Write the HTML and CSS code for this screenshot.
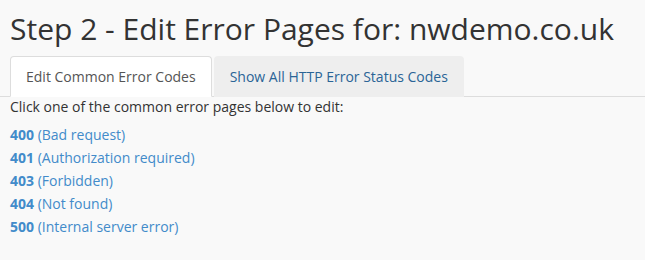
FILE: index.html
```html
<!DOCTYPE html>
<html lang="en">
<head>
  <meta charset="UTF-8">
  <title>Edit Error Pages</title>
  <link rel="stylesheet" href="styles.css">
</head>
<body>
  <h1>Step 2 - Edit Error Pages for: nwdemo.co.uk</h1>

  <ul class="tabs">
    <li class="active"><a href="#common">Edit Common Error Codes</a></li>
    <li><a href="#all">Show All HTTP Error Status Codes</a></li>
  </ul>

  <div class="tab-content">
    <p>Click one of the common error pages below to edit:</p>
    <ul class="error-list">
      <li><a href="#400"><strong>400</strong> (Bad request)</a></li>
      <li><a href="#401"><strong>401</strong> (Authorization required)</a></li>
      <li><a href="#403"><strong>403</strong> (Forbidden)</a></li>
      <li><a href="#404"><strong>404</strong> (Not found)</a></li>
      <li><a href="#500"><strong>500</strong> (Internal server error)</a></li>
    </ul>
  </div>
</body>
</html>
```

FILE: styles.css
```css
body {
  font-family: 'Open Sans', sans-serif;
  font-size: 14px;
  line-height: 1.42857;
  color: #333;
  background: #f9f9f9;
  margin: 0;
  padding: 0 10px;
}
h1 {
  font-size: 30px;
  font-weight: 400;
  line-height: 1.1;
  margin: 12px 0 11px;
}
a {
  color: #428bca;
  text-decoration: none;
}
.tabs {
  list-style: none;
  display: flex;
  margin: 0 -10px;
  padding: 0 10px;
  border-bottom: 1px solid #ddd;
}
.tabs li {
  margin-bottom: -1px;
}
.tabs a {
  display: block;
  margin-right: 2px;
  padding: 10px 15px 9px;
  border: 1px solid transparent;
  border-radius: 4px 4px 0 0;
  background: #eee;
  color: #2a6496;
}
.tabs .active a {
  color: #555;
  background: #fff;
  border-color: #ddd;
  border-bottom-color: transparent;
}
.tab-content p {
  margin: 0 0 6px;
}
.error-list {
  list-style: none;
  margin: 0;
  padding: 0;
}
.error-list li {
  line-height: 23px;
}
```
